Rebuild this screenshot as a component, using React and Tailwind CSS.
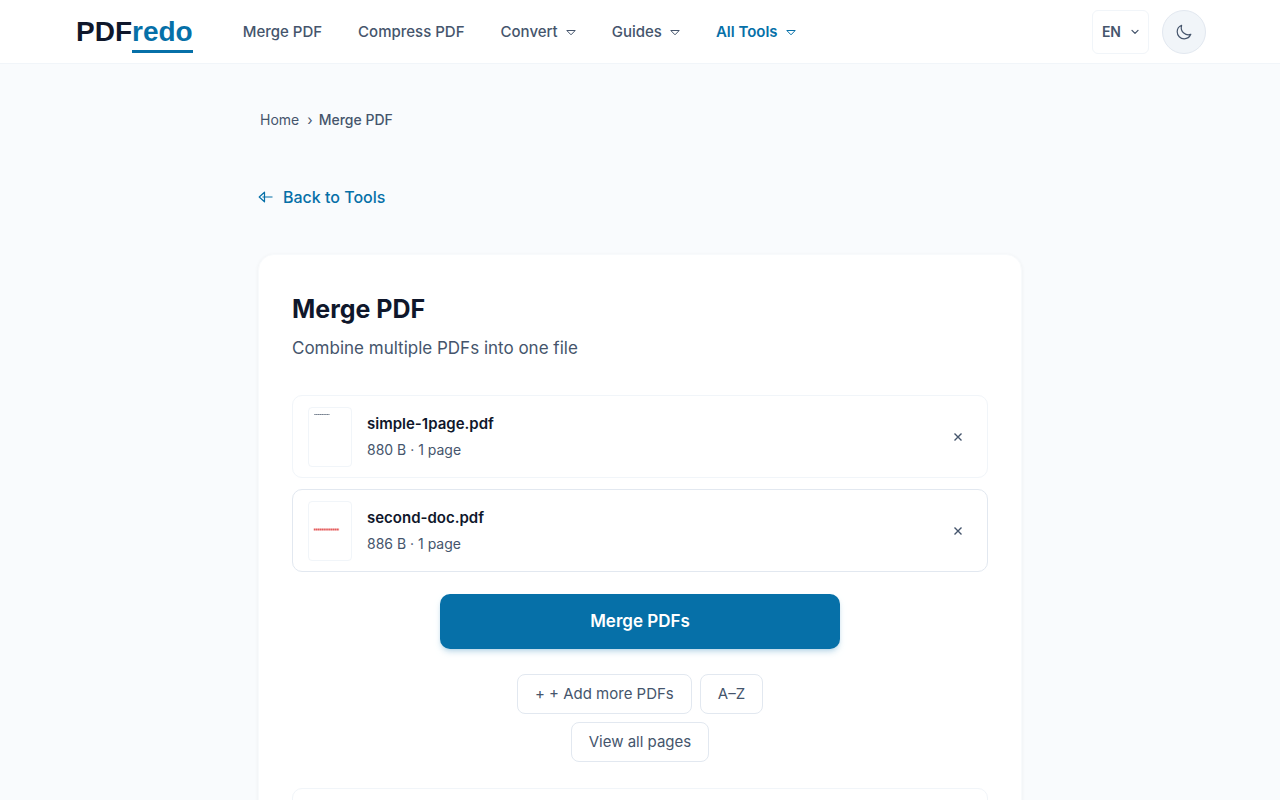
import { useState } from 'react'

const initialFiles = [
  { id: 1, name: 'simple-1page.pdf', info: '880 B · 1 page', border: 'border-slate-100' },
  { id: 2, name: 'second-doc.pdf', info: '886 B · 1 page', border: 'border-slate-200' },
]

const navItems = [
  { label: 'Merge PDF' },
  { label: 'Compress PDF' },
  { label: 'Convert', menu: true },
  { label: 'Guides', menu: true },
  { label: 'All Tools', menu: true, active: true },
]

function Caret() {
  return (
    <svg width="10" height="8" viewBox="0 0 10 8" fill="none" stroke="currentColor" strokeWidth="1" strokeLinejoin="round" aria-hidden="true">
      <path d="M0.8 2.5H9.2L5 6.8Z" />
    </svg>
  )
}

function Header() {
  return (
    <header className="h-16 bg-white border-b border-slate-100">
      <div className="h-full max-w-[1132px] mx-auto flex items-center justify-between">
        <div className="flex items-center">
          <a href="/" className="flex font-['Liberation_Sans',sans-serif] text-[28px] leading-8 font-bold text-slate-900 ml-[2px]">
            PDF
            <span className="relative text-[#0670a8]">
              redo
              <span className="absolute left-0 right-0 -bottom-[5px] h-[3px] bg-[#0670a8]" />
            </span>
          </a>
          <nav className="flex items-center gap-9 ml-[50px]">
            {navItems.map((item) => (
              <a
                key={item.label}
                href="#"
                className={`flex items-center gap-2 text-[15px] leading-6 ${item.active ? 'font-semibold text-[#0670a8]' : 'font-medium text-slate-600'}`}
              >
                {item.label}
                {item.menu && <Caret />}
              </a>
            ))}
          </nav>
        </div>
        <div className="flex items-center gap-[13px]">
          <button aria-label="Language" className="flex items-center gap-[10px] h-11 px-[9px] rounded-md border border-slate-100 bg-white text-sm font-semibold text-slate-600">
            EN
            <svg width="8" height="6" viewBox="0 0 8 6" fill="none" stroke="currentColor" strokeWidth="1.3" strokeLinecap="round" strokeLinejoin="round" aria-hidden="true">
              <path d="M1 1.4L4 4.4L7 1.4" />
            </svg>
          </button>
          <button aria-label="Toggle dark mode" className="flex items-center justify-center size-11 rounded-full border border-slate-200 bg-slate-100 text-slate-600">
            <svg width="16" height="16" viewBox="0 0 16 16" fill="none" stroke="currentColor" strokeWidth="1.2" strokeLinecap="round" strokeLinejoin="round" aria-hidden="true">
              <path d="M5.6 1.3C2.8 2.4 1.2 4.9 1.2 7.8C1.2 11.7 4.3 14.8 8.2 14.8C11.2 14.8 13.7 13 14.8 10.3C10.2 12 3.8 8.3 5.6 1.3Z" />
            </svg>
          </button>
        </div>
      </div>
    </header>
  )
}

function Thumbnail({ second }) {
  return (
    <svg width="44" height="60" viewBox="0 0 44 60" className="rounded-sm border border-slate-100 bg-white shrink-0" aria-hidden="true">
      {second ? (
        <path d="M5 28.500H31.500" stroke="#dc2626" strokeWidth="2" strokeDasharray="1.700 0.300" opacity="0.75" />
      ) : (
        <path d="M5.500 6.500H21.500" stroke="#475569" strokeWidth="1.100" strokeDasharray="1.600 0.300" opacity="0.75" />
      )}
    </svg>
  )
}

function FileRow({ file, onRemove }) {
  return (
    <li className={`flex items-center gap-[15px] px-[15px] pt-[11px] pb-[10px] rounded-[10px] border bg-white ${file.border}`}>
      <Thumbnail second={file.id === 2} />
      <div className="flex-1 min-w-0">
        <p className="text-[15px] leading-6 font-semibold text-slate-900 truncate">{file.name}</p>
        <p className="mt-[2px] text-sm leading-6 text-slate-600">{file.info}</p>
      </div>
      <button onClick={onRemove} aria-label={`Remove ${file.name}`} className="size-7 flex items-center justify-center text-slate-600">
        <svg width="8" height="8" viewBox="0 0 8 8" stroke="currentColor" strokeWidth="1.4" aria-hidden="true">
          <path d="M0.500 0.500L7.500 7.500M7.500 0.500L0.500 7.500" />
        </svg>
      </button>
    </li>
  )
}

function SmallButton({ children }) {
  return (
    <button className="h-10 px-[17px] rounded-lg border border-slate-200 bg-white text-[15px] text-slate-600">
      {children}
    </button>
  )
}

export default function App() {
  const [files, setFiles] = useState(initialFiles)

  const removeFile = (id) => setFiles(files.filter((f) => f.id !== id))

  return (
    <div className="min-h-screen bg-[#f9fbfd] font-['Inter',sans-serif] text-slate-600">
      <Header />
      <main className="max-w-[764px] mx-auto pt-11">
        <nav aria-label="Breadcrumb" className="flex items-center text-sm leading-6 pl-[2px]">
          <a href="/">Home</a>
          <span className="ml-2 mr-[6px]">›</span>
          <span className="font-medium">Merge PDF</span>
        </nav>

        <a href="/tools" className="inline-flex items-center gap-[10px] mt-[53px] text-base leading-6 font-medium text-[#0670a8]">
          <svg width="15" height="12" viewBox="0 0 15 12" fill="none" stroke="currentColor" strokeWidth="1.2" strokeLinejoin="round" aria-hidden="true">
            <path d="M6.500 1.200L1.200 6L6.500 10.800ZM4.500 6H14.500" />
          </svg>
          Back to Tools
        </a>

        <section className="mt-[45px] px-[33px] pt-9 pb-8 rounded-2xl border border-slate-50 bg-white shadow-[0_1px_4px_rgba(15,23,42,0.05)]">
          <h1 className="text-[25px] leading-9 font-bold text-slate-900">Merge PDF</h1>
          <p className="mt-[7px] text-[17px] leading-7">Combine multiple PDFs into one file</p>

          <ul className="mt-[33px] flex flex-col gap-[11px]">
            {files.map((file) => (
              <FileRow key={file.id} file={file} onRemove={() => removeFile(file.id)} />
            ))}
          </ul>

          <button className="block w-full max-w-[400px] h-[55px] mx-auto mt-[22px] rounded-[10px] bg-[#0670a8] text-[17px] font-semibold text-white shadow-md shadow-sky-700/20">
            Merge PDFs
          </button>

          <div className="flex flex-wrap justify-center gap-2 max-w-[320px] mx-auto mt-[25px]">
            <SmallButton>+ + Add more PDFs</SmallButton>
            <SmallButton>A–Z</SmallButton>
            <SmallButton>View all pages</SmallButton>
          </div>

          <div className="mt-[26px] h-16 rounded-[10px] border border-slate-100" />
        </section>
      </main>
    </div>
  )
}
